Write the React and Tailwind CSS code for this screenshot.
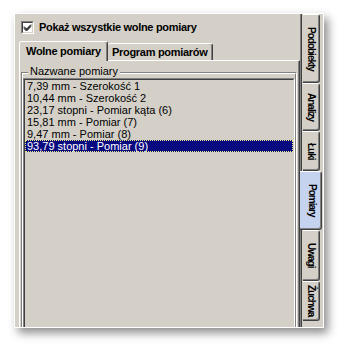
const items = [
  '7,39 mm - Szerokość 1',
  '10,44 mm - Szerokość 2',
  '23,17 stopni - Pomiar kąta (6)',
  '15,81 mm - Pomiar (7)',
  '9,47 mm - Pomiar (8)',
  '93,79 stopni - Pomiar (9)',
];

const sideTabs = [
  { label: 'Podobiekty', h: 'h-[69px]' },
  { label: 'Analizy', h: 'h-[48px]' },
  { label: 'Łuki', h: 'h-[40px]' },
  { label: 'Pomiary', h: 'h-[59px]', active: true },
  { label: 'Uwagi', h: 'h-[51px]' },
  { label: 'Żuchwa', h: 'h-[40px]' },
];

const SideTab = ({ label, h, active }) => (
  <div
    className={`flex items-center justify-center rounded-r-[3px] border-t border-r border-b border-t-white border-r-[#404040] border-b-[#404040] shadow-[inset_-1px_-1px_0_#808080] ${h} ${
      active ? 'relative z-10 -ml-[3px] w-[22px] bg-[#c6d3ef] pl-[3px]' : 'w-[17px] bg-[#d4d0c8]'
    }`}
  >
    <span className="whitespace-nowrap text-[10px] font-bold leading-none tracking-[-1px] text-black [writing-mode:vertical-rl]">
      {label}
    </span>
  </div>
);

const App = () => {
  return (
    <div className="min-h-screen bg-white pl-[14px] pt-[13px] font-['Liberation_Sans',Arial,sans-serif] text-[11px] text-black">
      <div className="flex h-[315px] w-[310px] overflow-hidden border border-white bg-[#d4d0c8] shadow-[4px_5px_9px_rgba(0,0,0,0.45)]">
        {/* main page */}
        <div className="flex h-full w-[287px] shrink-0 flex-col border-r border-r-[#404040] pl-[4px] pt-[7px] shadow-[inset_-1px_0_0_#808080]">
          <div className="flex h-[13px] items-center gap-[5px] pl-[2px]">
            <div className="h-[13px] w-[13px] border border-t-[#808080] border-l-[#808080] border-r-white border-b-white bg-white">
              <div className="h-full w-full border border-t-[#404040] border-l-[#404040] border-r-[#d4d0c8] border-b-[#d4d0c8]">
                <svg viewBox="0 0 9 9" className="h-[9px] w-[9px]">
                  <path d="M1 3.5 L3.5 6 L8 1.5 M1 4.5 L3.5 7 L8 2.5 M1 5.5 L3.5 8 L8 3.5" stroke="#000" strokeWidth="1" fill="none" />
                </svg>
              </div>
            </div>
            <span className="whitespace-nowrap font-bold leading-[13px] tracking-[-0.3px]">Pokaż wszystkie wolne pomiary</span>
          </div>

          {/* tabs */}
          <div className="mt-[7px] flex h-[19px] items-start">
            <div className="relative z-10 h-[20px] w-[89px] whitespace-nowrap rounded-t-[3px] border-t border-l border-r border-t-white border-l-white border-r-[#404040] bg-[#d4d0c8] pl-[6px] pt-[3px] font-bold leading-[13px] tracking-[-0.3px] shadow-[inset_-1px_0_0_#808080]">
              Wolne pomiary
            </div>
            <div className="mt-[2px] h-[17px] w-[105px] whitespace-nowrap rounded-t-[3px] border-t border-r border-t-white border-r-[#404040] pl-[4px] pt-[2px] font-bold leading-[13px] tracking-[-0.3px] shadow-[inset_-1px_0_0_#808080]">
              Program pomiarów
            </div>
          </div>

          {/* panel */}
          <div className="h-[300px] w-[281px] border-t border-l border-r border-t-white border-l-white border-r-[#404040] shadow-[inset_-1px_0_0_#808080]">
            <div className="relative ml-[1px] mt-[11px] h-[280px] w-[276px] border-t border-l border-r border-t-[#808080] border-l-[#808080] border-r-white">
              <span className="absolute -top-[8px] left-[6px] bg-[#d4d0c8] px-[2px] leading-[13px]">Nazwane pomiary</span>
              <div className="h-full w-full border-t border-l border-r border-t-white border-l-white border-r-[#808080] pt-[4px]">
                <div className="h-[260px] w-full border border-t-[#808080] border-l-[#808080] border-r-white border-b-white">
                  <div className="h-full w-full border border-t-[#404040] border-l-[#404040] border-r-[#d4d0c8] border-b-[#d4d0c8]">
                    {items.map((item, i) =>
                      i === items.length - 1 ? (
                        <div key={item} className="h-[12px] whitespace-nowrap border border-dotted border-[#f0f080] bg-[#0a0a80] pl-[1px] leading-[10px] text-white">
                          {item}
                        </div>
                      ) : (
                        <div key={item} className="h-[12px] whitespace-nowrap pl-[2px] leading-[12px]">
                          {item}
                        </div>
                      )
                    )}
                  </div>
                </div>
              </div>
            </div>
          </div>
        </div>

        {/* side tabs */}
        <div className="flex flex-col pl-[1px]">
          {sideTabs.map((t) => (
            <SideTab key={t.label} {...t} />
          ))}
        </div>
      </div>
    </div>
  );
};

export default App;
